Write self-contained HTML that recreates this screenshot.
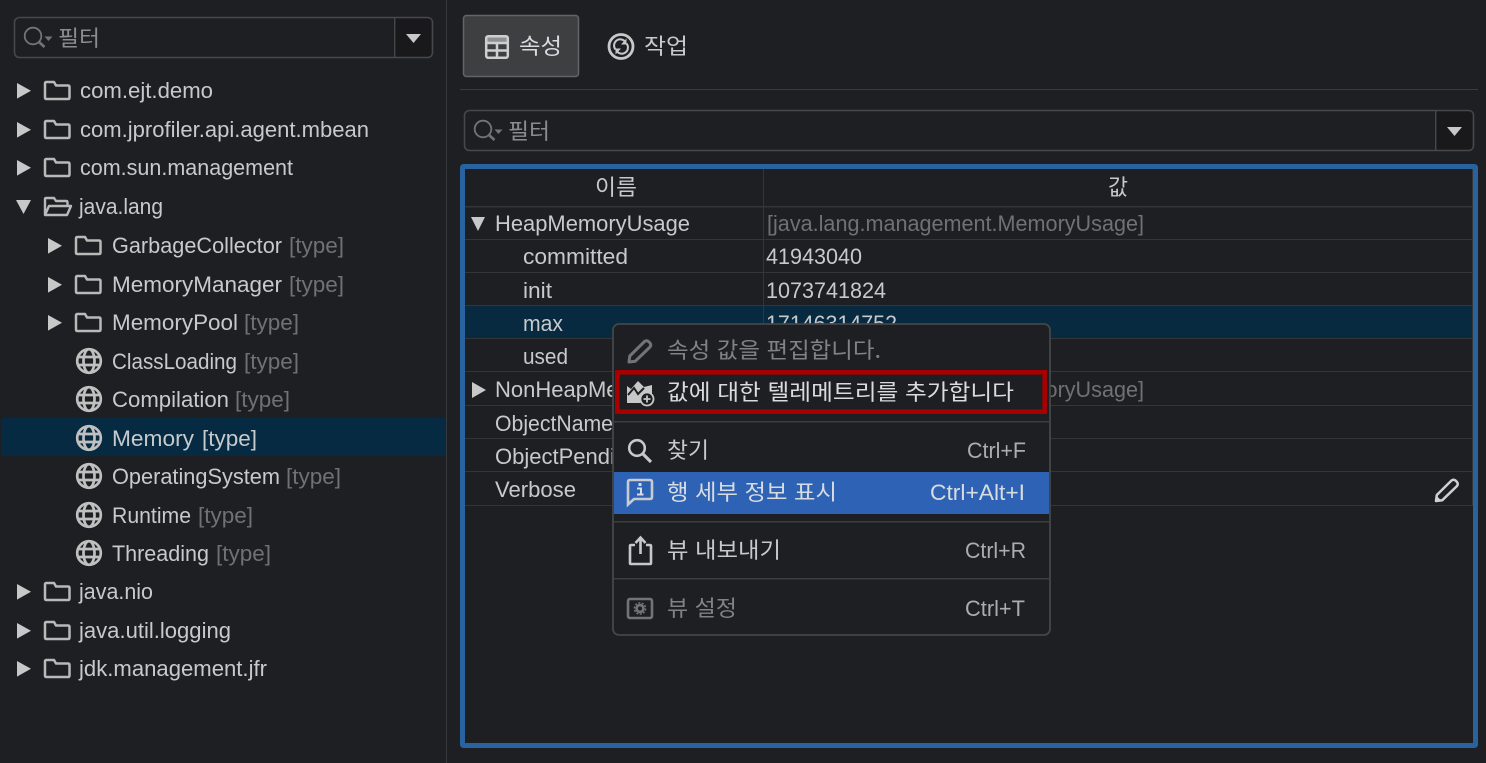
<!DOCTYPE html>
<html lang="ko"><head><meta charset="utf-8"><title>MBean</title>
<style>
html,body{margin:0;padding:0;background:#1e1f22;width:1486px;height:763px;overflow:hidden}
svg{display:block}
text{font-family:"Liberation Sans","Noto Sans CJK KR",sans-serif;font-size:22px;fill:#c6cacc;white-space:pre}
.k{font-family:"Noto Sans CJK KR","Liberation Sans",sans-serif;font-weight:400}
.g{fill:#6f7173}
.d{fill:#808284}
.s{fill:#a9adaf}
.w{fill:#d8dce0}
.f{fill:#8a8d90}
</style></head><body>
<svg width="1486" height="763" viewBox="0 0 1486 763" xmlns="http://www.w3.org/2000/svg">
<defs>
<path id="ar" d="M17 83 L31 90.8 L17 98.6Z" fill="#c8c8c8"/>
<path id="ad" d="M0 0 H15 L7.5 14Z" fill="#c8c8c8"/>
<path id="fo" d="M45 83.5 Q45 82 46.5 82 H54 L56 85.500 H68 Q69.5 85.500 69.5 87 V97.5 Q69.5 99 68 99 H46.5 Q45 99 45 97.5Z" fill="none" stroke="#b9b9b9" stroke-width="2.500" stroke-linejoin="round"/>
<g id="gl" fill="none" stroke="#c0c0c0" stroke-width="2.700"><circle cx="89" cy="361" r="11.800"/><ellipse cx="89" cy="361" rx="5.500" ry="11.800"/><path d="M77.5 357 H100.5 M77.5 365 H100.5"/></g>
<g id="se" fill="none" stroke="#70757a"><circle cx="33" cy="36" r="8.3" stroke-width="1.8"/><path d="M39 42 L44.5 47" stroke-width="2.6"/><path d="M44.500 36.500 H52.500 L48.500 41Z" fill="#70757a" stroke="none"/></g>
<path id="pe" d="M1 23 L1.800 17 L16.500 2.500 Q18.500 1 20.500 2.500 L22 4 Q23.500 6 22 8 L7.300 22.200Z" fill="none" stroke-linejoin="round"/>
</defs>

<rect width="1486" height="763" fill="#1e1f22"/>
<rect x="446" y="0" width="1" height="763" fill="#37383a"/>

<!-- left filter -->
<rect x="14.500" y="17.500" width="418" height="40" rx="5" fill="#1e1f22" stroke="#47484a" stroke-width="1.600"/>
<path d="M395 18.500 H428 Q431.500 18.500 431.500 22 V53 Q431.500 56.500 428 56.500 H395Z" fill="#19191b"/>
<rect x="394" y="18" width="1.400" height="39" fill="#47484a"/>
<path d="M406 34 H421 L413.5 43Z" fill="#c8c8c8"/>
<use href="#se"/>
<text class="k f" x="58" y="46" textLength="42" lengthAdjust="spacingAndGlyphs">필터</text>

<!-- tree selection -->
<rect x="1" y="418" width="445" height="38" fill="#062a41"/>

<!-- tree -->
<use href="#ar"/><use href="#fo"/><text x="80" y="98" textLength="133" lengthAdjust="spacingAndGlyphs">com.ejt.demo</text>
<g transform="translate(0,39)"><use href="#ar"/><use href="#fo"/></g><text x="80" y="137" textLength="289" lengthAdjust="spacingAndGlyphs">com.jprofiler.api.agent.mbean</text>
<g transform="translate(0,77)"><use href="#ar"/><use href="#fo"/></g><text x="80" y="175" textLength="213" lengthAdjust="spacingAndGlyphs">com.sun.management</text>
<use href="#ad" x="16" y="200"/>
<path d="M45 215 V199 Q45 198 46.5 198 H54 L56 201 H66 Q67.5 201 67.5 202.5 V205 M45 215 L49 206 H71 L67 215Z" fill="none" stroke="#b9b9b9" stroke-width="2.400" stroke-linejoin="round"/>
<text x="79" y="214" textLength="84" lengthAdjust="spacingAndGlyphs">java.lang</text>

<g transform="translate(31,155)"><use href="#ar"/><use href="#fo"/></g>
<text x="112" y="253" textLength="170" lengthAdjust="spacingAndGlyphs">GarbageCollector</text><text class="g" x="289" y="253" textLength="55" lengthAdjust="spacingAndGlyphs">[type]</text>
<g transform="translate(31,194)"><use href="#ar"/><use href="#fo"/></g>
<text x="112" y="292" textLength="170" lengthAdjust="spacingAndGlyphs">MemoryManager</text><text class="g" x="289" y="292" textLength="55" lengthAdjust="spacingAndGlyphs">[type]</text>
<g transform="translate(31,232)"><use href="#ar"/><use href="#fo"/></g>
<text x="112" y="330" textLength="126" lengthAdjust="spacingAndGlyphs">MemoryPool</text><text class="g" x="244" y="330" textLength="55" lengthAdjust="spacingAndGlyphs">[type]</text>

<use href="#gl"/><text x="112" y="369" textLength="125" lengthAdjust="spacingAndGlyphs">ClassLoading</text><text class="g" x="244" y="369" textLength="55" lengthAdjust="spacingAndGlyphs">[type]</text>
<use href="#gl" y="38"/><text x="112" y="407" textLength="117" lengthAdjust="spacingAndGlyphs">Compilation</text><text class="g" x="235" y="407" textLength="55" lengthAdjust="spacingAndGlyphs">[type]</text>
<use href="#gl" y="77"/><text x="112" y="446" textLength="82" lengthAdjust="spacingAndGlyphs">Memory</text><text x="202" y="446" textLength="55" lengthAdjust="spacingAndGlyphs">[type]</text>
<use href="#gl" y="115"/><text x="112" y="484" textLength="168" lengthAdjust="spacingAndGlyphs">OperatingSystem</text><text class="g" x="286" y="484" textLength="55" lengthAdjust="spacingAndGlyphs">[type]</text>
<use href="#gl" y="154"/><text x="112" y="523" textLength="79" lengthAdjust="spacingAndGlyphs">Runtime</text><text class="g" x="198" y="523" textLength="55" lengthAdjust="spacingAndGlyphs">[type]</text>
<use href="#gl" y="192"/><text x="112" y="561" textLength="97" lengthAdjust="spacingAndGlyphs">Threading</text><text class="g" x="216" y="561" textLength="55" lengthAdjust="spacingAndGlyphs">[type]</text>

<g transform="translate(0,501)"><use href="#ar"/><use href="#fo"/></g><text x="79" y="599" textLength="74" lengthAdjust="spacingAndGlyphs">java.nio</text>
<g transform="translate(0,540)"><use href="#ar"/><use href="#fo"/></g><text x="79" y="638" textLength="152" lengthAdjust="spacingAndGlyphs">java.util.logging</text>
<g transform="translate(0,578)"><use href="#ar"/><use href="#fo"/></g><text x="79" y="676" textLength="188" lengthAdjust="spacingAndGlyphs">jdk.management.jfr</text>

<!-- tabs -->
<rect x="463.500" y="15.500" width="115" height="61" rx="3" fill="#3e3f41" stroke="#626466" stroke-width="1.500"/>
<rect x="486" y="36" width="22" height="7" rx="2" fill="#8f9091"/>
<g fill="none" stroke="#cfcfcf" stroke-width="2.500"><rect x="486.200" y="36.200" width="21.600" height="21.600" rx="2"/><path d="M486 43 H508 M486 50.500 H508 M497 43 V58"/></g>
<text class="k w" x="519" y="54" textLength="43" lengthAdjust="spacingAndGlyphs">속성</text>
<circle cx="621" cy="46.500" r="12" fill="none" stroke="#c8c8c8" stroke-width="2.800"/>
<path d="M615.500 49.500 A6 6 0 0 1 625 41.500 M626.500 43.500 A6 6 0 0 1 617 51.500" fill="none" stroke="#c8c8c8" stroke-width="2"/>
<path d="M626.500 38.500 V44.500 H621Z M615.500 54.500 V48.500 H621Z" fill="#c8c8c8"/>
<text class="k" x="644" y="54" textLength="44" lengthAdjust="spacingAndGlyphs">작업</text>
<rect x="460" y="89" width="1018" height="1" fill="#3a3b3d"/>

<!-- right filter -->
<rect x="464.500" y="110.500" width="1009" height="40" rx="5" fill="#1e1f22" stroke="#47484a" stroke-width="1.600"/>
<path d="M1436 111.500 H1469 Q1472.500 111.500 1472.500 115 V146 Q1472.500 149.500 1469 149.500 H1436Z" fill="#19191b"/>
<rect x="1435" y="111" width="1.400" height="39" fill="#47484a"/>
<path d="M1447 127 H1462 L1454.500 136Z" fill="#c8c8c8"/>
<use href="#se" x="450" y="93"/>
<text class="k f" x="508" y="139" textLength="42" lengthAdjust="spacingAndGlyphs">필터</text>

<!-- table -->
<rect x="465" y="306" width="1007" height="33" fill="#072a40"/>
<g fill="#343537">
<rect x="465" y="206" width="1008" height="1.500"/>
<rect x="465" y="239" width="1007" height="1"/>
<rect x="465" y="272" width="1007" height="1"/>
<rect x="465" y="305" width="1007" height="1"/>
<rect x="465" y="338" width="1007" height="1"/>
<rect x="465" y="371" width="1007" height="1"/>
<rect x="465" y="405" width="1007" height="1"/>
<rect x="465" y="438" width="1007" height="1"/>
<rect x="465" y="471" width="1007" height="1"/>
<rect x="465" y="505" width="1007" height="1"/>
<rect x="763" y="169" width="1" height="337"/>
<rect x="1472" y="169" width="1" height="337"/>
</g>
<rect x="462.500" y="166.500" width="1013" height="579" rx="1" fill="none" stroke="#28639f" stroke-width="5"/>

<text class="k" x="595" y="195" textLength="42" lengthAdjust="spacingAndGlyphs">이름</text>
<text class="k" x="1108" y="195" textLength="20" lengthAdjust="spacingAndGlyphs">값</text>
<path d="M471 217 H485 L478 231Z" fill="#c8c8c8"/>
<text x="495" y="231" textLength="195" lengthAdjust="spacingAndGlyphs">HeapMemoryUsage</text>
<text class="g" x="767" y="231" textLength="377" lengthAdjust="spacingAndGlyphs">[java.lang.management.MemoryUsage]</text>
<text x="523" y="264" textLength="105" lengthAdjust="spacingAndGlyphs">committed</text>
<text x="766" y="264" textLength="96" lengthAdjust="spacingAndGlyphs">41943040</text>
<text x="523" y="298" textLength="29" lengthAdjust="spacingAndGlyphs">init</text>
<text x="766" y="298" textLength="120" lengthAdjust="spacingAndGlyphs">1073741824</text>
<text x="523" y="331" textLength="40" lengthAdjust="spacingAndGlyphs">max</text>
<text x="766" y="331" textLength="131" lengthAdjust="spacingAndGlyphs">17146314752</text>
<text x="523" y="364" textLength="45" lengthAdjust="spacingAndGlyphs">used</text>
<path d="M472 382 L486 390 L472 398Z" fill="#c8c8c8"/>
<text x="495" y="397" textLength="236" lengthAdjust="spacingAndGlyphs">NonHeapMemoryUsage</text>
<text class="g" x="767" y="397" textLength="377" lengthAdjust="spacingAndGlyphs">[java.lang.management.MemoryUsage]</text>
<text x="495" y="431" textLength="118" lengthAdjust="spacingAndGlyphs">ObjectName</text>
<text x="495" y="464">ObjectPendingFinalizationCount</text>
<text x="495" y="497" textLength="81" lengthAdjust="spacingAndGlyphs">Verbose</text>
<g transform="translate(1435,478)"><use href="#pe" stroke="#d0d0d0" stroke-width="2.500"/><path d="M1 23 L1.800 18 L6 22.300Z" fill="#d0d0d0"/></g>

<!-- context menu -->
<rect x="613" y="324" width="437" height="311" rx="6" fill="#1e1f22" stroke="#454648" stroke-width="1.800"/>
<g transform="translate(628,339)"><use href="#pe" stroke="#727476" stroke-width="3"/></g>
<text class="k d" x="667" y="358" textLength="214" lengthAdjust="spacingAndGlyphs">속성 값을 편집합니다.</text>

<rect x="617.300" y="372.300" width="427.400" height="39.400" fill="none" stroke="#a80000" stroke-width="4.600"/>
<path d="M627 386 L631 389 L638 381 L644 387 L652 385 V394 L645 403 H627Z" fill="#c8c8c8"/>
<path d="M628 395 L634 388 L638 394 L644 388" fill="none" stroke="#1e1f22" stroke-width="2"/>
<circle cx="647" cy="399" r="6.500" fill="#1e1f22" stroke="#c8c8c8" stroke-width="1.800"/>
<path d="M643.500 399 H650.500 M647 395.500 V402.500" stroke="#c8c8c8" stroke-width="1.800"/>
<text class="k w" x="667" y="400" textLength="347" lengthAdjust="spacingAndGlyphs">값에 대한 텔레메트리를 추가합니다</text>

<rect x="614" y="421" width="435" height="1.500" fill="#3c3d3f"/>

<g fill="none" stroke="#c8c8c8"><circle cx="637" cy="448" r="7.800" stroke-width="2.600"/><path d="M643 454 L651 462" stroke-width="3.200"/></g>
<text class="k" x="667" y="458" textLength="42" lengthAdjust="spacingAndGlyphs">찾기</text>
<text class="s" x="967" y="458" textLength="59" lengthAdjust="spacingAndGlyphs">Ctrl+F</text>

<rect x="614" y="472" width="435" height="42" fill="#2d62b5"/>
<path d="M630 480 H650 Q652 480 652 482 V497 Q652 499 650 499 H634 L628 504.500 V482 Q628 480 630 480Z" fill="none" stroke="#c8ccd2" stroke-width="2.600"/>
<rect x="638.500" y="483" width="3" height="3" fill="#d8dce0"/>
<path d="M637 488.500 H641 V494.500 M637 494.500 H643.500" fill="none" stroke="#d8dce0" stroke-width="2"/>
<text class="k w" x="667" y="500" textLength="170" lengthAdjust="spacingAndGlyphs">행 세부 정보 표시</text>
<text class="w" x="930" y="500" textLength="95" lengthAdjust="spacingAndGlyphs">Ctrl+Alt+I</text>

<rect x="614" y="521" width="435" height="1.500" fill="#3c3d3f"/>

<g fill="none" stroke="#c8c8c8" stroke-width="2.600"><path d="M635 545 H631 Q630 545 630 546 V563 Q630 564 631 564 H650 Q651 564 651 563 V546 Q651 545 650 545 H646"/><path d="M640.500 554 V538 M635.500 543 L640.500 537.500 L645.500 543"/></g>
<text class="k" x="667" y="558" textLength="114" lengthAdjust="spacingAndGlyphs">뷰 내보내기</text>
<text class="s" x="965" y="558" textLength="61" lengthAdjust="spacingAndGlyphs">Ctrl+R</text>

<rect x="614" y="578" width="435" height="1.500" fill="#3c3d3f"/>

<rect x="628" y="599" width="24" height="19" rx="2" fill="none" stroke="#727476" stroke-width="2.600"/>
<circle cx="640" cy="608.500" r="3.400" fill="none" stroke="#727476" stroke-width="2.600"/>
<circle cx="640" cy="608.500" r="5.600" fill="none" stroke="#727476" stroke-width="1.500" stroke-dasharray="2 1.500"/>
<text class="k d" x="667" y="616" textLength="70" lengthAdjust="spacingAndGlyphs">뷰 설정</text>
<text class="s" x="965" y="616" textLength="60" lengthAdjust="spacingAndGlyphs">Ctrl+T</text>
</svg>
</body></html>
